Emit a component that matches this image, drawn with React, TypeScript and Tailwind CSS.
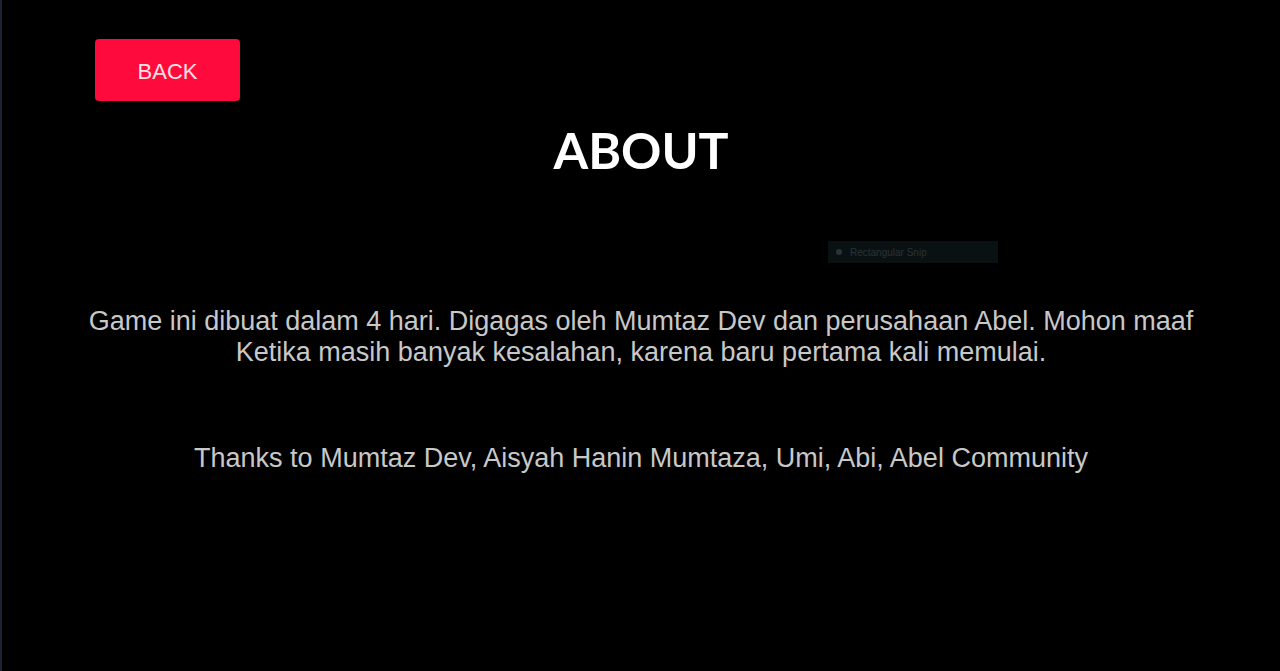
import React from "react";

const App: React.FC = () => {
  return (
    <div className="relative h-[671px] w-full overflow-hidden bg-black border-l-2 border-[#1c2333] font-['Liberation_Sans',Arial,sans-serif]">
      <div className="pl-[93px] pt-[39px]">
        <button className="h-[62px] w-[145px] rounded-[4px] bg-[#ff0a3c] pt-[2px] text-[22px] text-[#ffe0e6]">
          BACK
        </button>
      </div>
      <h1 className="mt-[24px] text-center font-['Lato',sans-serif] text-[50px] font-bold leading-none text-white">
        ABOUT
      </h1>
      <div className="absolute left-[826px] top-[241px] flex h-[22px] w-[170px] items-center gap-2 bg-[#0a1113] px-2 text-[10px] text-[#2a3336]">
        <span className="h-[6px] w-[6px] rounded-full bg-[#2a3336]" />
        <span>Rectangular Snip</span>
      </div>
      <div className="mt-[131px] text-center text-[27px] leading-[31px] text-[#c8c8c8]">
        <p>
          Game ini dibuat dalam 4 hari. Digagas oleh Mumtaz Dev dan perusahaan Abel. Mohon maaf
          <br />
          Ketika masih banyak kesalahan, karena baru pertama kali memulai.
        </p>
        <p className="mt-[75px]">Thanks to Mumtaz Dev, Aisyah Hanin Mumtaza, Umi, Abi, Abel Community</p>
      </div>
    </div>
  );
};

export default App;
